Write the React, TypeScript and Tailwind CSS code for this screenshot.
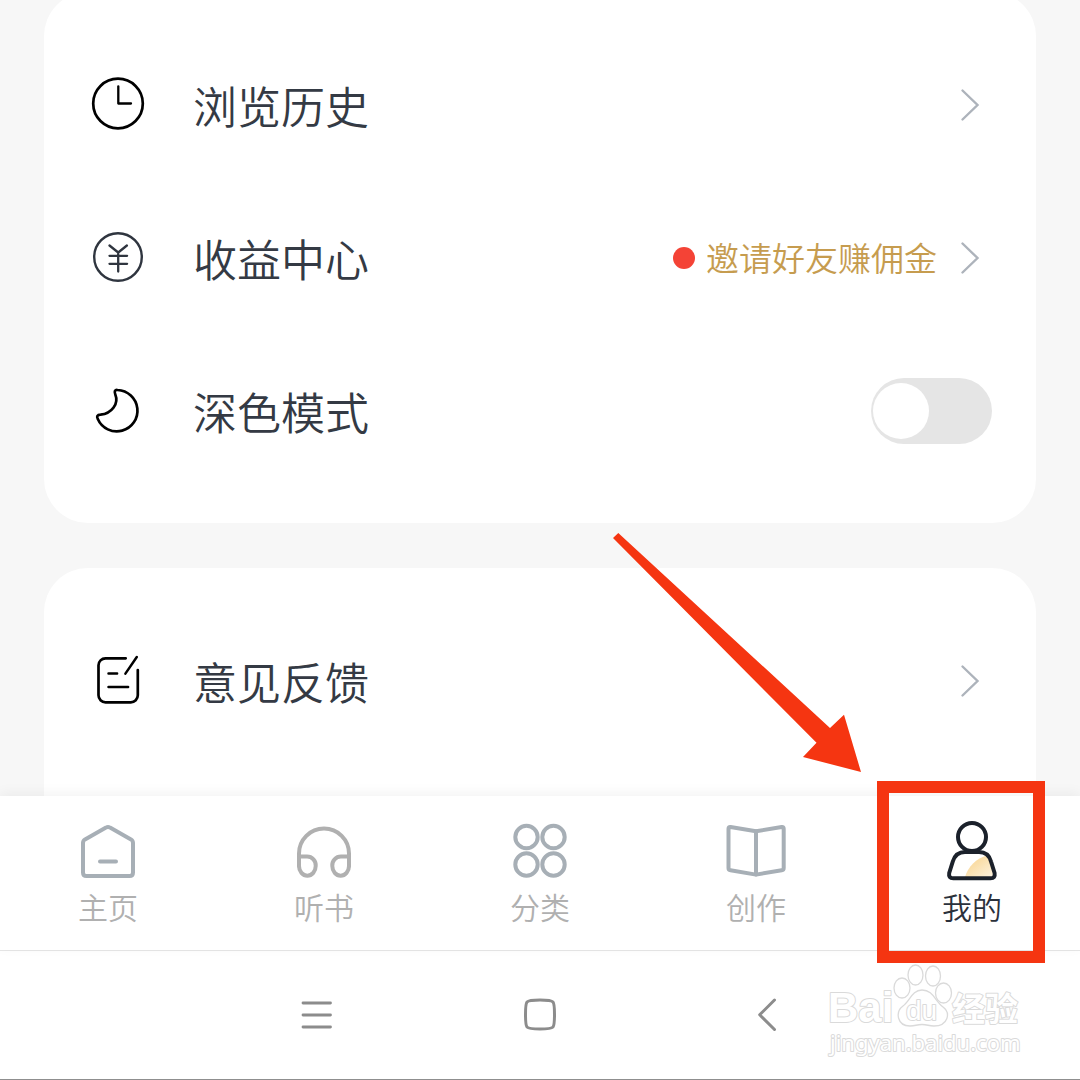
import React, { useState } from 'react'

const Chevron = () => (
    <svg className="w-11 h-11 shrink-0" viewBox="0 0 44 44" fill="none" stroke="#adb3bb" strokeWidth="2.4" strokeLinecap="round" aria-hidden="true">
        <path d="M14.5 7.5 29.5 22 14.5 36.5" />
    </svg>
)

const RowIcon = ({ children, color = '#000' }: { children: React.ReactNode; color?: string }) => (
    <svg className="w-15 h-15 shrink-0" viewBox="0 0 60 60" fill="none" stroke={color} strokeWidth="2.7" strokeLinecap="round" strokeLinejoin="round" aria-hidden="true">
        {children}
    </svg>
)

const ClockIcon = () => (
    <RowIcon>
        <circle cx="30" cy="28.5" r="24.8" />
        <path d="M30.3 11.3V28.5H43" strokeWidth="2.3" />
    </RowIcon>
)

const YenIcon = () => (
    <RowIcon color="#2f353f">
        <circle cx="30" cy="29" r="23.8" strokeWidth="2.4" />
        <path d="m21.5 17.5 8.7 7 8.7-7M30.2 24.5v19M21.5 27.8h17.6M21.5 35.8h17.6" strokeWidth="2.3" />
    </RowIcon>
)

const MoonIcon = () => (
    <RowIcon>
        <path d="M29.5 9A20.7 20.7 0 1 1 9.8 38C8.3 35.5 9.3 33.9 12.5 33.7 24 32.6 31 22.5 27.3 13.5 26 10.3 27 8.7 29.5 9Z" />
    </RowIcon>
)

const NoteIcon = () => (
    <RowIcon>
        <path d="M37.7 7.3H17.5a7 7 0 0 0-7 7v30a7 7 0 0 0 7 7h25.3a7 7 0 0 0 7-7V19" />
        <path d="M48.8 6 37.4 22.6M20.5 22.5h8.6M20.5 36h19.6" strokeWidth="2.5" />
    </RowIcon>
)

const TabIcon = ({ children, color = '#a7afb6' }: { children: React.ReactNode; color?: string }) => (
    <svg className="w-16 h-16" viewBox="0 0 64 64" fill="none" stroke={color} strokeWidth="4" strokeLinecap="round" strokeLinejoin="round" aria-hidden="true">
        {children}
    </svg>
)

const HomeIcon = () => (
    <TabIcon>
        <path d="M30 7.6 9 19.4Q7 20.6 7 23V52.5Q7 56 10.5 56H53.5Q57 56 57 52.5V23Q57 20.6 55 19.4L34 7.6Q32 6.4 30 7.6Z" />
        <path d="M24 41.5H40" />
    </TabIcon>
)

const HeadphoneIcon = () => (
    <TabIcon color="#b0b0b0">
        <path d="M7 46V33.5a25 25 0 0 1 50 0V46" />
        <path d="M7 36.5H15a8.7 8.7 0 0 1 8.7 9.5 8.35 9.7 0 0 1-16.7 0M57 36.5H49a8.7 8.7 0 0 0-8.7 9.5 8.35 9.7 0 0 0 16.7 0" />
    </TabIcon>
)

const CategoryIcon = () => (
    <TabIcon>
        <circle cx="18.5" cy="17" r="11.2" />
        <circle cx="45.5" cy="17" r="11.2" />
        <circle cx="18.5" cy="44.5" r="11.2" />
        <circle cx="45.5" cy="44.5" r="11.2" />
    </TabIcon>
)

const BookIcon = () => (
    <TabIcon>
        <path d="M32 11.3 6.5 7Q4.5 6.7 4.5 8.7V48Q4.5 50 6.5 50.3L32 54.6 57.7 50.3Q59.7 50 59.7 48V8.7Q59.7 6.7 57.7 7Z" />
        <path d="M32 11.3V54.6" />
    </TabIcon>
)

const UserIcon = () => (
    <TabIcon color="#1b212b">
        <defs>
            <linearGradient id="userGlow" x1="0" y1="0" x2="1" y2="1">
                <stop offset="0.2" stopColor="#f9d899" />
                <stop offset="1" stopColor="#fdf3e0" />
            </linearGradient>
        </defs>
        <path d="M25 57C28 47 36 38 47.5 35.5L54 54Q54 57 51 57Z" fill="url(#userGlow)" stroke="none" />
        <circle cx="32" cy="17" r="14" />
        <path d="M25 32H39C46 32 49.5 36 51 41.5L54.6 53Q55.5 58.3 50.5 58.3H13.3Q8.3 58.3 9.2 53L12.8 41.5C14.5 36 18 32 25 32Z" />
    </TabIcon>
)

const Row = ({ icon, label, note }: { icon: React.ReactNode; label: string; note?: string }) => (
    <a href="#" className="flex items-center h-[153px]">
        {icon}
        <span className="ml-[45px] flex-1 text-[44px]">{label}</span>
        {note && (
            <span className="flex items-center mr-[11px]">
                <span className="w-[22px] h-[22px] mr-[11px] rounded-full bg-[#f44336]" />
                <span className="text-[33px] text-[#c69c4f]">{note}</span>
            </span>
        )}
        <Chevron />
    </a>
)

const tabs = [
    { label: '主页', icon: <HomeIcon /> },
    { label: '听书', icon: <HeadphoneIcon /> },
    { label: '分类', icon: <CategoryIcon /> },
    { label: '创作', icon: <BookIcon /> },
    { label: '我的', icon: <UserIcon />, active: true },
]

// Red arrow and frame pointing at the active tab
const Callout = () => (
    <>
        <svg className="absolute right-full bottom-full mr-[3px] mb-6 w-[248px] h-[239px] pointer-events-none" viewBox="0 0 248 239" aria-hidden="true">
            <path d="M5.3 0 217 195 231 181.7 248 239 190 224 203.5 209.7 0 5Z" fill="#f53511" />
        </svg>
        <span className="absolute left-[13px] right-[35px] -top-[15px] -bottom-[13px] border-12 border-[#f53511] pointer-events-none" />
    </>
)

const Watermark = () => (
    <svg className="absolute right-14 bottom-4 w-[200px] h-[102px] pointer-events-none" viewBox="0 0 200 102" fill="#fff" stroke="#dadada" strokeWidth="2" strokeLinejoin="round">
        <text x="4" y="61" fontSize="42" fontWeight="700" fontFamily="'Liberation Sans', sans-serif" paintOrder="stroke">Bai</text>
        <g strokeWidth="1.3">
            <ellipse cx="78" cy="27" rx="8" ry="10" />
            <ellipse cx="91.5" cy="14" rx="7.5" ry="10" />
            <ellipse cx="109" cy="15" rx="7.5" ry="10" />
            <ellipse cx="119.5" cy="32" rx="8" ry="10" />
            <path d="M98 29C88 29 86 40 79 45 71 51 73 65 86 65 92 65 92 63.5 98 63.5S104 65 110 65C124 65 127 52 119 46 111 40 109 29 98 29Z" />
        </g>
        <g paintOrder="stroke">
            <text x="82" y="59" fontSize="28" fontFamily="'Liberation Sans', sans-serif">du</text>
            <text x="128" y="60" fontSize="33" fontWeight="700" fontFamily="'Noto Sans CJK SC', sans-serif">经验</text>
            <text x="6" y="90" fontSize="22" fontWeight="400" fontFamily="'Noto Sans', sans-serif">jingyan.baidu.com</text>
        </g>
    </svg>
)

const SystemBar = () => (
    <div className="relative shrink-0 flex items-center justify-center gap-32 h-[130px] pb-px border-t border-t-[#e6e6e6] border-b border-b-[#8f8f8f] bg-white">
        <button type="button" aria-label="menu" className="w-24 flex justify-center">
            <svg className="w-12 h-12" viewBox="0 0 48 48" fill="none" stroke="#8c8c8c" strokeWidth="2.8" strokeLinecap="round">
                <path d="M11 12h27.5M11 24h27.5M11 36h27.5" />
            </svg>
        </button>
        <button type="button" aria-label="home" className="w-24 flex justify-center">
            <svg className="w-12 h-12" viewBox="0 0 48 48" fill="none" stroke="#8c8c8c" strokeWidth="3">
                <path d="M24 9C33 9 35.500 9.400 37 11 38.300 12.500 38.500 16 38.500 23.500S38.300 34.500 37 36C35.500 37.600 33 38 24 38S12.500 37.600 11 36C9.700 34.500 9.500 31 9.500 23.500S9.700 12.500 11 11C12.500 9.400 15 9 24 9Z" />
            </svg>
        </button>
        <button type="button" aria-label="back" className="w-24 flex justify-center">
            <svg className="w-12 h-12" viewBox="0 0 48 48" fill="none" stroke="#8c8c8c" strokeWidth="3" strokeLinecap="round" strokeLinejoin="round">
                <path d="M34.5 9 19.7 23.800 34.5 38.500" />
            </svg>
        </button>
        <Watermark />
    </div>
)

const App = () => {
    const [dark, setDark] = useState(false)

    return (
        <div className="h-screen flex flex-col overflow-hidden bg-[#f7f7f7] text-[#343a44] font-['Noto_Sans_CJK_SC',sans-serif] font-[350]">
            <main className="flex-1 min-h-0 overflow-hidden px-11">
                <section className="-mt-2 py-9 px-11 rounded-[44px] bg-white">
                    <Row icon={<ClockIcon />} label="浏览历史" />
                    <Row icon={<YenIcon />} label="收益中心" note="邀请好友赚佣金" />
                    <label className="flex items-center h-[153px]">
                        <MoonIcon />
                        <span className="ml-[45px] flex-1 text-[44px]">深色模式</span>
                        <input
                            type="checkbox"
                            role="switch"
                            checked={dark}
                            onChange={(e) => setDark(e.target.checked)}
                            className="appearance-none flex items-center w-[121px] h-[66px] px-[2px] rounded-full bg-[#e5e5e5] checked:bg-[#c69c4f] checked:justify-end before:block before:w-14 before:h-14 before:rounded-full before:bg-white"
                        />
                    </label>
                </section>
                <section className="mt-[45px] pt-9 pb-20 px-11 rounded-[44px] bg-white">
                    <Row icon={<NoteIcon />} label="意见反馈" />
                </section>
            </main>

            <nav className="relative z-10 shrink-0 grid grid-cols-5 h-[154px] bg-white shadow-[0_-3px_12px_rgba(0,0,0,0.05)]">
                {tabs.map((tab) => (
                    <a key={tab.label} href="#" className="relative flex flex-col items-center pt-6">
                        {tab.icon}
                        <span className={`text-[30px] leading-11 ${tab.active ? 'text-[#2b313b]' : 'text-[#b0b0b0]'}`}>{tab.label}</span>
                        {tab.active && <Callout />}
                    </a>
                ))}
            </nav>

            <SystemBar />
        </div>
    )
}

export default App
